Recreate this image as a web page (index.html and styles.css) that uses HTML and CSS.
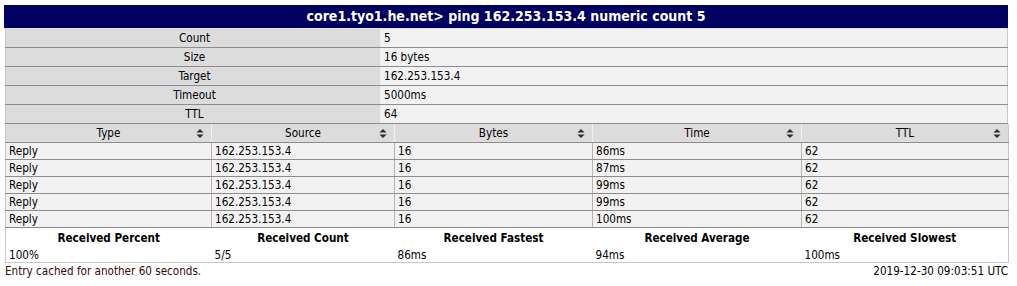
FILE: index.html
```html
<!DOCTYPE html>
<html>
<head>
<meta charset="utf-8">
<link rel="stylesheet" href="styles.css">
</head>
<body>
<div class="page">
  <div class="title">core1.tyo1.he.net&gt; ping 162.253.153.4 numeric count 5</div>
  <table class="info">
    <colgroup><col class="c-label"><col></colgroup>
    <tr><td class="label">Count</td><td class="value">5</td></tr>
    <tr><td class="label">Size</td><td class="value">16 bytes</td></tr>
    <tr><td class="label">Target</td><td class="value">162.253.153.4</td></tr>
    <tr><td class="label">Timeout</td><td class="value">5000ms</td></tr>
    <tr><td class="label">TTL</td><td class="value">64</td></tr>
  </table>
  <table class="results">
    <colgroup>
      <col class="c1"><col class="c2"><col class="c3"><col class="c4"><col class="c5">
    </colgroup>
    <thead>
      <tr>
        <th><span class="hd">Type</span><svg class="sort" viewBox="0 0 8 10"><path d="M0 4 L4 0 L8 4 Z M0 6 L4 10 L8 6 Z"/></svg></th>
        <th><span class="hd">Source</span><svg class="sort" viewBox="0 0 8 10"><path d="M0 4 L4 0 L8 4 Z M0 6 L4 10 L8 6 Z"/></svg></th>
        <th><span class="hd">Bytes</span><svg class="sort" viewBox="0 0 8 10"><path d="M0 4 L4 0 L8 4 Z M0 6 L4 10 L8 6 Z"/></svg></th>
        <th><span class="hd">Time</span><svg class="sort" viewBox="0 0 8 10"><path d="M0 4 L4 0 L8 4 Z M0 6 L4 10 L8 6 Z"/></svg></th>
        <th><span class="hd">TTL</span><svg class="sort" viewBox="0 0 8 10"><path d="M0 4 L4 0 L8 4 Z M0 6 L4 10 L8 6 Z"/></svg></th>
      </tr>
    </thead>
    <tbody class="data">
      <tr><td>Reply</td><td>162.253.153.4</td><td>16</td><td>86ms</td><td>62</td></tr>
      <tr><td>Reply</td><td>162.253.153.4</td><td>16</td><td>87ms</td><td>62</td></tr>
      <tr><td>Reply</td><td>162.253.153.4</td><td>16</td><td>99ms</td><td>62</td></tr>
      <tr><td>Reply</td><td>162.253.153.4</td><td>16</td><td>99ms</td><td>62</td></tr>
      <tr><td>Reply</td><td>162.253.153.4</td><td>16</td><td>100ms</td><td>62</td></tr>
    </tbody>
    <tbody class="summary">
      <tr class="sum-head"><th>Received Percent</th><th>Received Count</th><th>Received Fastest</th><th>Received Average</th><th>Received Slowest</th></tr>
      <tr class="sum-val"><td>100%</td><td>5/5</td><td>86ms</td><td>94ms</td><td>100ms</td></tr>
    </tbody>
  </table>
  <div class="footer">
    <span class="cached">Entry cached for another 60 seconds.</span>
    <span class="stamp">2019-12-30 09:03:51 UTC</span>
  </div>
</div>
</body>
</html>
```
FILE: styles.css
```css
html, body {
  margin: 0;
  padding: 0;
  background: #ffffff;
}

body {
  font-family: "DejaVu Sans Condensed", "DejaVu Sans", sans-serif;
  font-size: 11.6px;
  color: #000;
}

.page {
  width: 1004px;
  padding: 5px 0 0 4px;
}

.title {
  background: #000060;
  color: #ffffff;
  font-weight: bold;
  font-size: 14px;
  text-align: center;
  height: 23px;
  line-height: 23px;
}

table {
  border-collapse: collapse;
  table-layout: fixed;
  width: 1003px;
  margin-left: 1px;
}

td, th {
  padding: 0 0 0 3px;
  white-space: nowrap;
  overflow: hidden;
}

.info {
  border-top: 1px solid #e4e4e4;
}

.info .c-label { width: 375px; }

.info td {
  height: 18px;
  border-bottom: 1px solid #8c8c8c;
}

.info td.label {
  background: #dcdcdc;
  text-align: center;
  border-left: 1px solid #c8c8c8;
  border-right: 1px solid #ececec;
}

.info td.value {
  background: #f2f2f2;
  border-right: 1px solid #c8c8c8;
}

.results .c1 { width: 206px; }
.results .c2 { width: 183px; }
.results .c3 { width: 198px; }
.results .c4 { width: 209px; }
.results .c5 { width: 207px; }

.results thead th {
  background: #dcdcdc;
  font-weight: normal;
  height: 18px;
  position: relative;
  text-align: center;
  border-bottom: 1px solid #8c8c8c;
  border-right: 1px solid #f0f0f0;
  padding: 0;
}

.results thead th:first-child { border-left: 1px solid #c8c8c8; }
.results thead th:last-child { border-right: 1px solid #c8c8c8; }

.sort {
  position: absolute;
  right: 7px;
  top: 5px;
  width: 8px;
  height: 9px;
  fill: #2e2e2e;
}

.data td {
  background: #f2f2f2;
  height: 16px;
  border-bottom: 1px solid #8c8c8c;
  border-left: 1px solid #b4b4b4;
  border-right: 1px solid #b4b4b4;
}

.data td:first-child { border-left: 1px solid #c8c8c8; }
.data td:last-child { border-right: 1px solid #c8c8c8; }

.summary tr td:first-child,
.summary tr th:first-child { border-left: 1px solid #c8c8c8; }
.summary tr td:last-child,
.summary tr th:last-child { border-right: 1px solid #c8c8c8; }

.sum-head th {
  height: 19px;
  padding: 0;
  font-weight: bold;
  text-align: center;
  vertical-align: middle;
}

.sum-val td {
  height: 15px;
  border-bottom: 1px solid #c8c8c8;
}

.footer {
  display: flex;
  justify-content: space-between;
  padding-left: 1px;
  height: 16px;
  line-height: 16px;
}

.cached { color: #3a0808; }
.stamp { color: #000; }
```
